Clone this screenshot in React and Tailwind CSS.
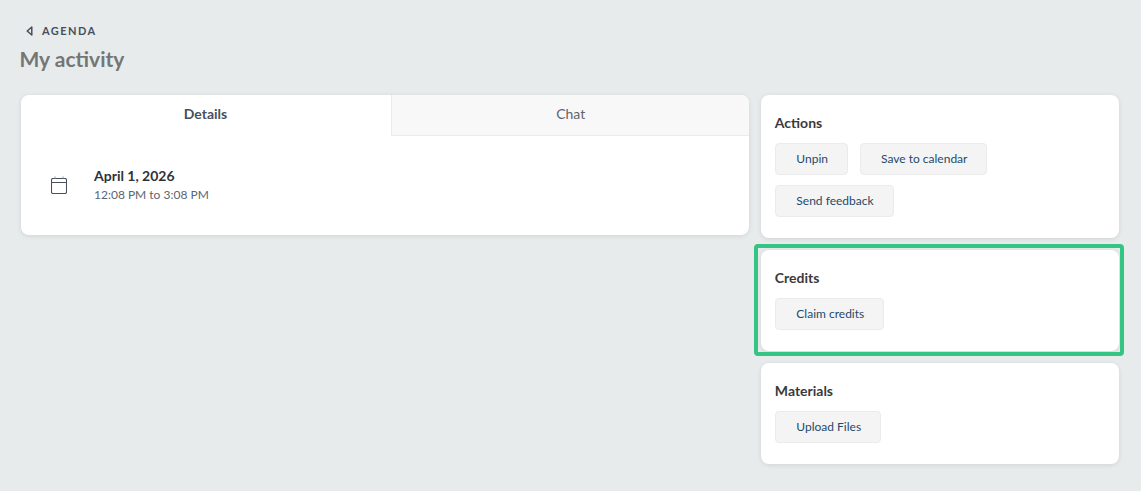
const Button = ({ children }) => (
  <button className="h-8 pl-5 pr-[19px] bg-[#f4f4f5] border border-[#ebebeb] rounded text-xs text-[#1f4a6b]">
    {children}
  </button>
);

const SideCard = ({ title, children, highlight }) => (
  <div className="relative bg-white rounded-lg shadow-[0_1px_5px_rgba(0,0,0,0.1)] px-3.5 pt-5 pb-[21px]">
    {highlight && (
      <div className="absolute -left-[7px] -right-[5px] -top-[6px] -bottom-[5px] border-4 border-[#34c585] rounded-sm pointer-events-none" />
    )}
    <h3 className="-ml-[0.5px] text-sm leading-4 font-bold text-[#3a3a3a]">{title}</h3>
    <div className="flex flex-wrap gap-x-3 gap-y-2.5 mt-3">{children}</div>
  </div>
);

export default function App() {
  return (
    <div className="min-h-screen bg-[#e8ebec] pl-5 pr-[22px] pt-[24px] font-['Lato','Open_Sans',sans-serif]">
      <a className="flex items-center gap-[9px] pl-1.5 h-3.5 text-[11px] font-bold tracking-[0.13em] text-[#47505b]">
        <svg width="7" height="10" viewBox="0 0 7 10" fill="none" stroke="#47505b" strokeWidth="1.5">
          <path d="M5.8 1 1.2 5l4.6 4z" strokeLinejoin="round" />
        </svg>
        AGENDA
      </a>
      <h1 className="-ml-[0.5px] mt-[7px] text-[21px] leading-7 font-bold text-[#757575]">My activity</h1>

      <div className="flex items-start gap-3 mt-[22px]">
        <div className="w-[729px] ml-px bg-white rounded-lg shadow-[0_1px_5px_rgba(0,0,0,0.1)] overflow-hidden">
          <div className="flex h-[41px] text-sm">
            <div className="w-[370px] pr-px pb-1 flex items-center justify-center font-bold text-[#47505b]">Details</div>
            <div className="flex-1 pb-0.5 flex items-center justify-center bg-[#f8f8f8] border-l border-b border-[#ebebeb] text-[#5c6570]">
              Chat
            </div>
          </div>
          <div className="flex items-center gap-[27px] pl-[30px] h-[99px] pb-0.5">
            <svg width="16" height="18" viewBox="0 0 16 18" fill="none" stroke="#47505b" strokeWidth="1.1">
              <rect x="0.5" y="2.5" width="15" height="15" rx="1.5" />
              <path d="M0.5 6.5h15" />
              <path d="M4 0.5v2M12 0.5v2" stroke="#9aa1a9" />
            </svg>
            <div>
              <div className="text-sm leading-5 font-bold text-[#2e3238]">April 1, 2026</div>
              <div className="text-xs leading-[18px] text-[#5c6570]">12:08 PM to 3:08 PM</div>
            </div>
          </div>
        </div>

        <div className="w-[358px] flex flex-col gap-3">
          <SideCard title="Actions">
            <Button>Unpin</Button>
            <Button>Save to calendar</Button>
            <Button>Send feedback</Button>
          </SideCard>
          <SideCard title="Credits" highlight>
            <Button>Claim credits</Button>
          </SideCard>
          <SideCard title="Materials">
            <Button>Upload Files</Button>
          </SideCard>
        </div>
      </div>
    </div>
  );
}
